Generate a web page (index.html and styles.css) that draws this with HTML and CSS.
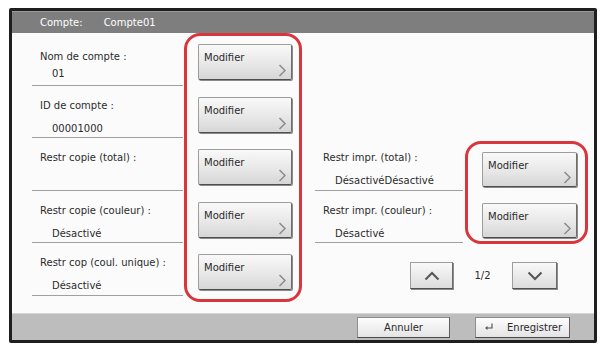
FILE: index.html
```html
<!DOCTYPE html>
<html lang="fr">

<head>
    <meta charset="utf-8">
    <meta name="viewport" content="width=device-width, initial-scale=1.0">
    <title>Compte</title>
    <link rel="stylesheet" href="styles.css">
</head>

<body>

    <div class="ecran">
        <div class="entete">
            <span>Compte:</span>
            <span class="nom">Compte01</span>
        </div>

        <div class="contenu">
            <div class="gauche">
                <div class="infos">
                    <div class="ligne premiere">
                        <p class="titre">Nom de compte :</p>
                        <p class="valeur">01</p>
                    </div>
                    <div class="ligne">
                        <p class="titre">ID de compte :</p>
                        <p class="valeur">00001000</p>
                    </div>
                    <div class="ligne">
                        <p class="titre">Restr copie (total) :</p>
                    </div>
                    <div class="ligne">
                        <p class="titre">Restr copie (couleur) :</p>
                        <p class="valeur">Désactivé</p>
                    </div>
                    <div class="ligne">
                        <p class="titre">Restr cop (coul. unique) :</p>
                        <p class="valeur">Désactivé</p>
                    </div>
                </div>
                <div class="cercle cercle-gauche">
                    <button class="modifier"><span>Modifier</span><svg class="fleche" width="9" height="13" viewBox="0 0 9 13"><polyline points="1.5,1 7,6.5 1.5,12" /></svg></button>
                    <button class="modifier"><span>Modifier</span><svg class="fleche" width="9" height="13" viewBox="0 0 9 13"><polyline points="1.5,1 7,6.5 1.5,12" /></svg></button>
                    <button class="modifier"><span>Modifier</span><svg class="fleche" width="9" height="13" viewBox="0 0 9 13"><polyline points="1.5,1 7,6.5 1.5,12" /></svg></button>
                    <button class="modifier"><span>Modifier</span><svg class="fleche" width="9" height="13" viewBox="0 0 9 13"><polyline points="1.5,1 7,6.5 1.5,12" /></svg></button>
                    <button class="modifier"><span>Modifier</span><svg class="fleche" width="9" height="13" viewBox="0 0 9 13"><polyline points="1.5,1 7,6.5 1.5,12" /></svg></button>
                </div>
            </div>

            <div class="droite">
                <div class="paire">
                    <div class="infos infos-droite">
                        <div class="ligne">
                            <p class="titre">Restr impr. (total) :</p>
                            <p class="valeur">DésactivéDésactivé</p>
                        </div>
                        <div class="ligne">
                            <p class="titre">Restr impr. (couleur) :</p>
                            <p class="valeur">Désactivé</p>
                        </div>
                    </div>
                    <div class="cercle cercle-droite">
                        <button class="modifier"><span>Modifier</span><svg class="fleche" width="9" height="13" viewBox="0 0 9 13"><polyline points="1.5,1 7,6.5 1.5,12" /></svg></button>
                        <button class="modifier"><span>Modifier</span><svg class="fleche" width="9" height="13" viewBox="0 0 9 13"><polyline points="1.5,1 7,6.5 1.5,12" /></svg></button>
                    </div>
                </div>

                <div class="pages">
                    <button class="page haut"><svg width="16" height="10" viewBox="0 0 16 10"><polyline points="1.5,8.5 8,2 14.5,8.5" /></svg></button>
                    <span class="numero">1/2</span>
                    <button class="page bas"><svg width="16" height="10" viewBox="0 0 16 10"><polyline points="1.5,1.5 8,8 14.5,1.5" /></svg></button>
                </div>
            </div>
        </div>

        <div class="pied">
            <button class="action annuler">Annuler</button>
            <button class="action enregistrer"><svg class="retour" width="10" height="8" viewBox="0 0 10 8"><path d="M8 0.5 V5 H2.5" /><path d="M3.5 3 L1 5 L3.5 7 Z" class="pointe" /></svg>Enregistrer</button>
        </div>
    </div>

</body>

</html>
```

FILE: styles.css
```css
*,
body * {
    box-sizing: border-box;
}

body {
    margin: 0;
    padding: 0;
    background-color: #fff;
    font-family: "DejaVu Sans", Verdana, sans-serif;
    font-size: 10px;
    color: #2b2b2b;
}

p {
    margin: 0;
}

button {
    font-family: inherit;
    font-size: 10px;
    color: #2b2b2b;
    padding: 0;
    cursor: pointer;
}

.ecran {
    margin: 8px 0 0 9px;
    width: 588px;
    height: 335px;
    border: 3px solid #1f1f1f;
    border-radius: 2px;
    display: flex;
    flex-direction: column;
    background-color: #fbfbfb;
}

.entete {
    height: 22px;
    background-color: #7e7e7e;
    border-top: 1px solid #9a9a9a;
    color: #fff;
    display: flex;
    align-items: center;
    padding-left: 28px;
}

.entete .nom {
    margin-left: 21px;
}

.contenu {
    height: 280px;
    display: flex;
    padding-left: 20px;
}

.gauche {
    display: flex;
    align-items: flex-start;
}

.infos {
    width: 151px;
    margin-right: 1px;
}

.ligne {
    height: 52.5px;
    padding: 13px 0 0 8px;
    border-bottom: 1px solid #a0a0a0;
    line-height: 14px;
}

.premiere {
    padding-top: 17px;
}

.valeur {
    margin-top: 9px;
    padding-left: 12px;
}

.premiere .valeur {
    margin-top: 3px;
}

.cercle {
    border: 3px solid #d9353c;
    border-radius: 16px;
    display: flex;
    flex-direction: column;
}

.cercle-gauche {
    width: 118px;
    height: 269px;
    padding: 8px 7px 0 11px;
    gap: 16.5px;
}

.modifier {
    position: relative;
    width: 94px;
    height: 36px;
    flex-shrink: 0;
    display: flex;
    align-items: flex-start;
    padding: 7px 0 0 5px;
    line-height: 12px;
    border: 1px solid #9d9d9d;
    border-right-color: #6d6d6d;
    border-bottom-color: #4f4f4f;
    border-radius: 2px;
    background: linear-gradient(#f9f9f9, #e6e6e6 60%, #d6d6d6);
    box-shadow: 1px 1px 0 #8a8a8a;
}

.fleche {
    position: absolute;
    right: 4px;
    bottom: 2px;
}

.fleche polyline {
    fill: none;
    stroke: #8c8c8c;
    stroke-width: 1.5;
}

.droite {
    margin-left: 13px;
    width: 273px;
    padding-top: 105px;
}

.paire {
    display: flex;
    align-items: flex-start;
}

.infos-droite {
    width: 148px;
    margin-right: 2px;
}

.cercle-droite {
    width: 123px;
    margin-top: 3px;
    padding: 8px 0 3px 14px;
    gap: 16px;
}

.cercle-droite .modifier {
    width: 95px;
    height: 35px;
}

.pages {
    display: flex;
    align-items: center;
    justify-content: flex-end;
    margin-top: 18px;
    padding-right: 31px;
}

.page {
    width: 43px;
    height: 27px;
    border: 1px solid #9d9d9d;
    border-right-color: #6d6d6d;
    border-bottom-color: #4f4f4f;
    background: linear-gradient(#f9f9f9, #dcdcdc);
    box-shadow: 1px 1px 0 #8a8a8a;
    display: flex;
    align-items: center;
    justify-content: center;
}

.page.bas {
    width: 45px;
}

.page polyline {
    fill: none;
    stroke: #555;
    stroke-width: 2;
}

.numero {
    width: 59px;
    text-align: center;
}

.pied {
    height: 27px;
    background-color: #bdbdbd;
    border-top: 1px solid #d6d6d6;
    display: flex;
    align-items: center;
    justify-content: flex-end;
    padding-right: 24px;
    gap: 25px;
}

.action {
    width: 93px;
    height: 21px;
    border: 1px solid #8d8d8d;
    border-right-color: #5f5f5f;
    border-bottom-color: #4a4a4a;
    background: linear-gradient(#fdfdfd, #e4e4e4);
    display: flex;
    align-items: center;
    justify-content: center;
}

.enregistrer {
    width: 95px;
    justify-content: flex-start;
    padding-left: 8px;
}

.retour {
    margin-right: 13px;
}

.retour path {
    fill: none;
    stroke: #555;
    stroke-width: 1.2;
}

.retour .pointe {
    fill: #555;
    stroke: none;
}
```
